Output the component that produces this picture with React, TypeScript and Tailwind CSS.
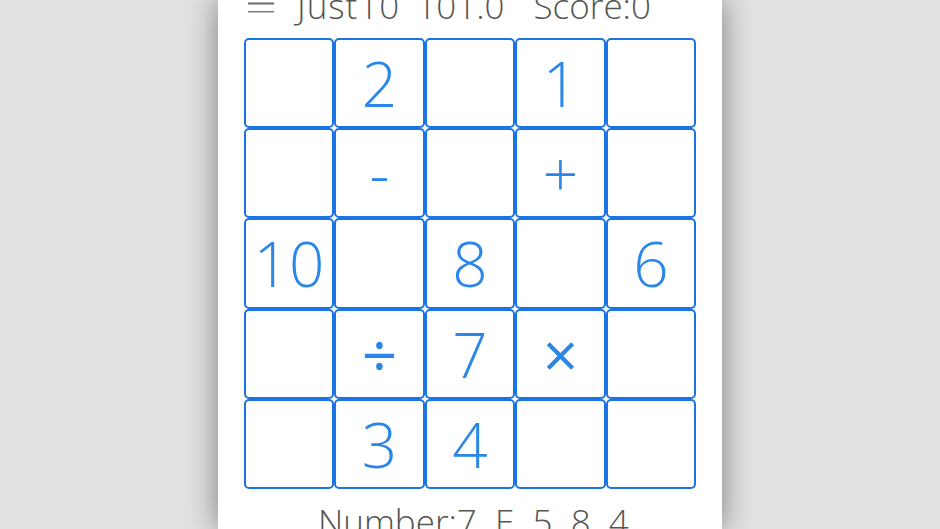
const cells: string[] = [
  '', '2', '', '1', '',
  '', '-', '', '+', '',
  '10', '', '8', '', '6',
  '', '÷', '7', '×', '',
  '', '3', '4', '', '',
];

function Menu() {
  return (
    <svg width="26" height="28" viewBox="0 0 26 28" className="shrink-0">
      <rect x="0" y="6" width="26" height="2" fill="#6b6b6b" />
      <rect x="0" y="14.5" width="26" height="2" fill="#6b6b6b" />
      <rect x="0" y="23" width="26" height="1.5" fill="#7a7a7a" />
    </svg>
  );
}

export default function App() {
  return (
    <div className="h-screen w-full overflow-hidden bg-[#e1e1e1]">
      <div
        className="mx-auto flex h-full w-[504px] flex-col bg-white shadow-[0_0_28px_rgba(0,0,0,0.45)]"
        style={{ fontFamily: '"Open Sans", "Noto Sans", sans-serif' }}
      >
        {/* Header */}
        <div className="-mt-[12px] flex h-[50px] shrink-0 items-start pl-[30px] text-[35px] font-light leading-none text-[#555]">
          <Menu />
          <span className="ml-[23px] tracking-[1px]">Just10</span>
          <span className="ml-[16px]">101.0</span>
          <span className="ml-[29px]">Score:0</span>
        </div>

        {/* Board */}
        <div className="mx-auto grid shrink-0 grid-cols-[repeat(5,90.5px)] auto-rows-[90.2px]">
          {cells.map((c, i) => (
            <div
              key={i}
              className={
                'flex items-center justify-center rounded-[5px] border-[2.5px] border-[#1a75e2] text-[62px] leading-none text-[#2a86e8] ' +
                (c === '×' || c === '÷' ? 'font-normal' : 'font-light')
              }
            >
              {c}
            </div>
          ))}
        </div>

        {/* Footer */}
        <div className="mt-[15px] shrink-0 whitespace-pre pl-[100px] text-[35px] font-light leading-none text-[#555]">
          {'Number:7  E  5  8  4'}
        </div>
      </div>
    </div>
  );
}
